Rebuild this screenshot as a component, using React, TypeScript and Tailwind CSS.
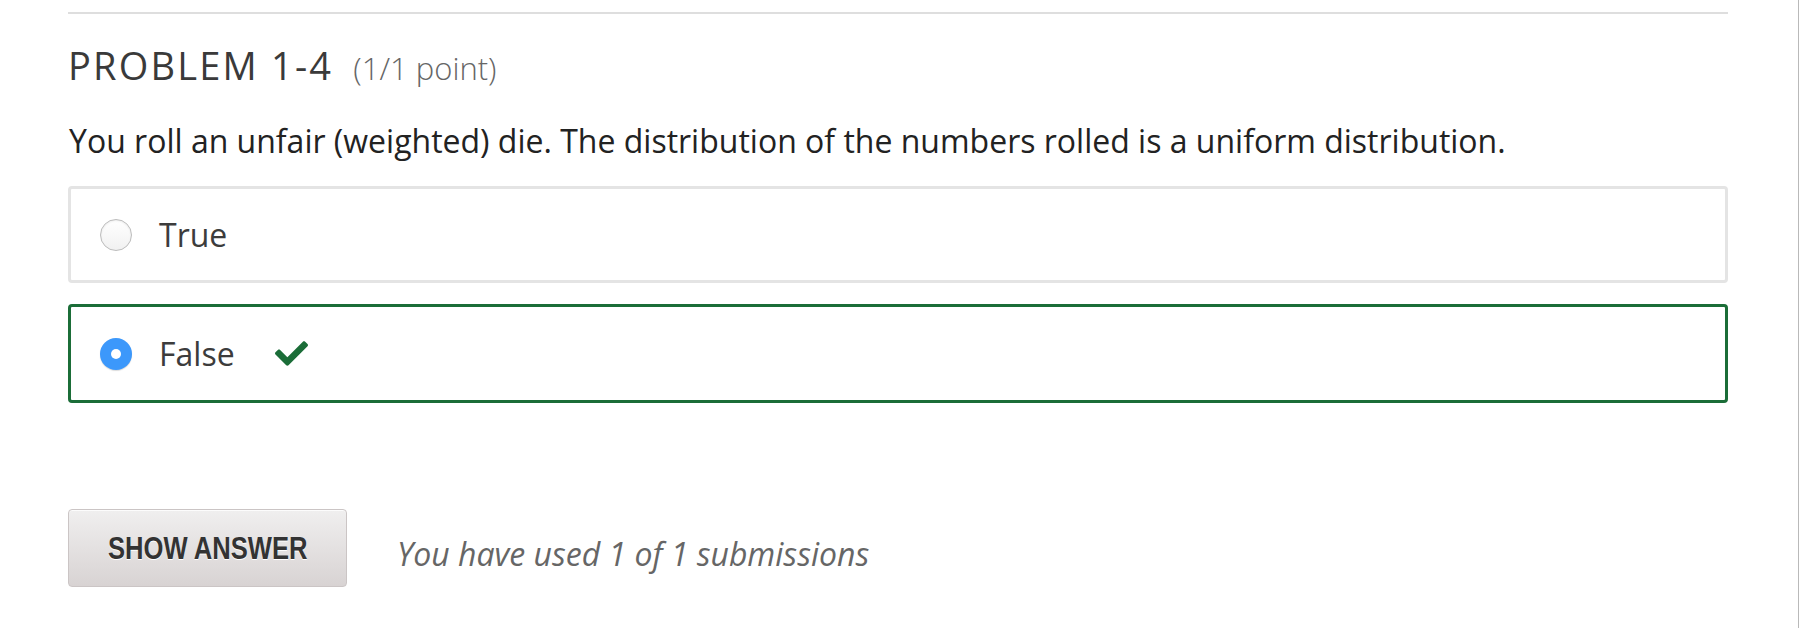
const options = [
  { label: "True", selected: false, correct: false },
  { label: "False", selected: true, correct: true },
];

function CheckIcon() {
  return (
    <svg viewBox="0 64 512 384" className="h-[25px] w-[33px]" fill="#1b6d38">
      <path d="M173.898 439.404l-166.4-166.4c-9.997-9.997-9.997-26.206 0-36.204l36.203-36.204c9.997-9.998 26.207-9.998 36.204 0L192 312.69 432.095 72.596c9.997-9.997 26.207-9.997 36.204 0l36.203 36.204c9.997 9.997 9.997 26.206 0 36.204l-294.4 294.401c-9.998 9.997-26.207 9.997-36.204-.001z" />
    </svg>
  );
}

function Radio({ selected }: { selected: boolean }) {
  if (selected) {
    return (
      <span className="flex h-[32px] w-[32px] shrink-0 items-center justify-center rounded-full bg-[#3c98fb] shadow-[0_1px_1px_rgba(0,0,0,0.15)]">
        <span className="h-[10px] w-[10px] rounded-full bg-white" />
      </span>
    );
  }
  return (
    <span className="h-[32px] w-[32px] shrink-0 rounded-full border border-[#bcbcbc] bg-[linear-gradient(180deg,#ffffff_0%,#f1f1f1_100%)] shadow-[inset_0_1px_2px_rgba(0,0,0,0.08)]" />
  );
}

export default function App() {
  return (
    <div className="min-h-screen w-full border-r border-[#b9b9b9] bg-white font-['Open_Sans',sans-serif] text-[#333]">
      <div className="pl-[68px] pr-[70px] pt-[12px]">
        <div className="border-t-2 border-[#dedede] pl-px" />

        <h2 className="mt-[32px] flex items-baseline leading-none">
          <span className="text-[38px] font-normal tracking-[2.2px] text-[#3a3a3a]">PROBLEM 1-4</span>
          <span className="ml-[20px] text-[31px] font-light text-[#666]">(1/1 point)</span>
        </h2>

        <p className="mt-[41px] pl-[1px] text-[32px] leading-none text-[#222]">
          You roll an unfair (weighted) die. The distribution of the numbers rolled is a uniform distribution.
        </p>

        <div className="mt-[29px] flex flex-col gap-[21px]">
          {options.map((o) => (
            <label
              key={o.label}
              className={`flex items-center rounded-[4px] border-[3px] bg-white pl-[29px] ${
                o.correct ? "h-[99px] border-[#1b6d38]" : "h-[97px] border-[#e4e4e4]"
              }`}
            >
              <Radio selected={o.selected} />
              <span className="ml-[27px] text-[32px] leading-none text-[#3c3c3c]">{o.label}</span>
              {o.correct && (
                <span className="ml-[40px] flex items-center">
                  <CheckIcon />
                </span>
              )}
            </label>
          ))}
        </div>

        <div className="mt-[106px] flex items-center">
          <button className="flex h-[78px] w-[279px] items-center justify-center rounded-[4px] border border-[#cbc5c5] bg-[linear-gradient(180deg,#f0efef_0%,#d8d3d3_100%)] shadow-[inset_0_1px_0_rgba(255,255,255,0.8)]">
            <span className="inline-block origin-center scale-x-[0.8] font-['Liberation_Sans',Arial,sans-serif] text-[32px] font-bold leading-none text-[#333] [text-shadow:0_1px_0_#fff]">
              SHOW ANSWER
            </span>
          </button>
          <span className="ml-[50px] mt-[12px] text-[32px] italic leading-none text-[#666]">
            You have used 1 of 1 submissions
          </span>
        </div>
      </div>
    </div>
  );
}
